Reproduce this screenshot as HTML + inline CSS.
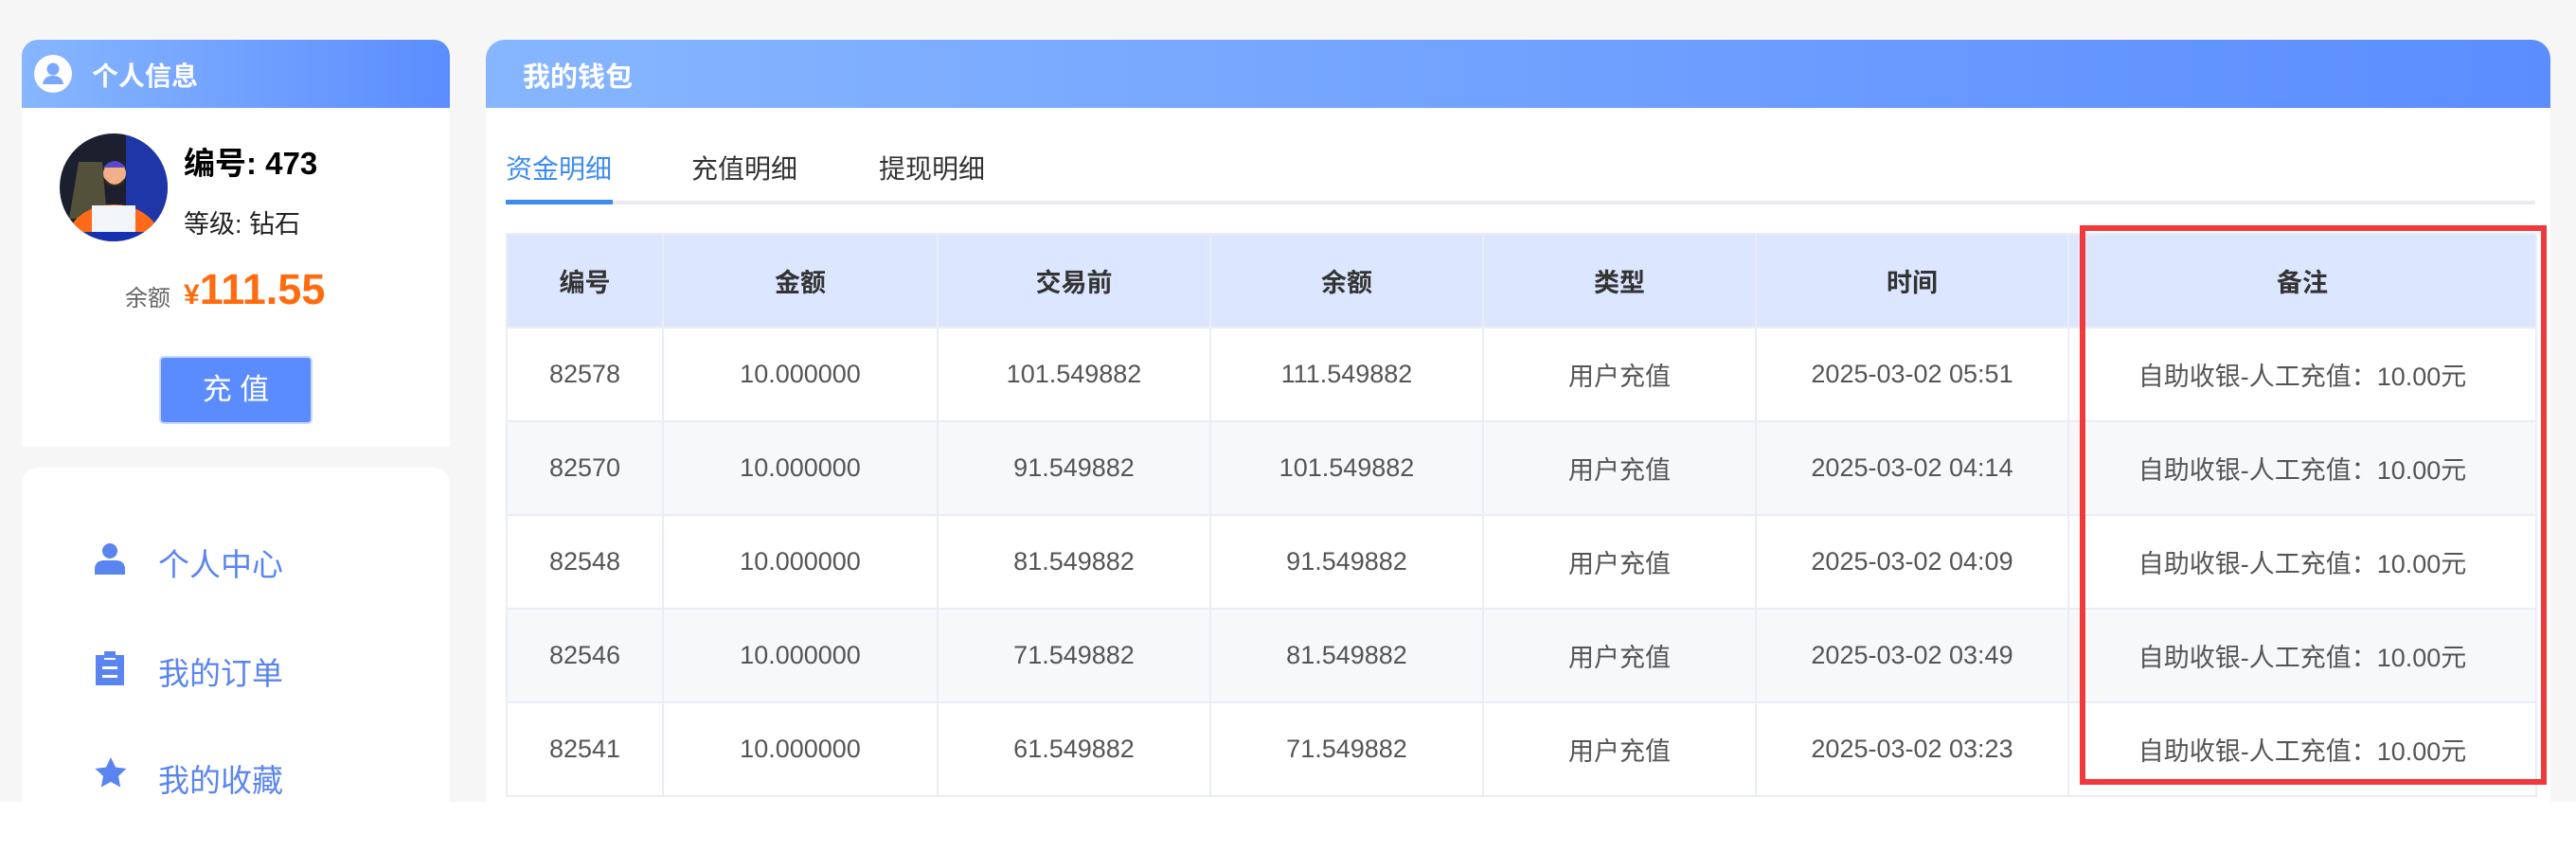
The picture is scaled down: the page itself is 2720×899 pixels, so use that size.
<!DOCTYPE html>
<html><head><meta charset="utf-8"><style>
*{margin:0;padding:0;box-sizing:border-box}
body{width:2720px;height:899px;background:#fff;font-family:"Liberation Sans","Noto Sans CJK SC",sans-serif;position:relative;overflow:hidden}
.bg{position:absolute;left:0;top:0;width:2720px;height:847px;background:#f6f6f6}
.abs{position:absolute}
.hdr{background:linear-gradient(90deg,#87b6ff,#5b8dff);overflow:hidden}
.tri{position:absolute;width:0;height:0;border-left:solid transparent;border-right:solid transparent}
table{border-collapse:collapse;table-layout:fixed}
td,th{border:2px solid #e9edf5;text-align:center;font-size:27px;color:#555;height:99px;font-weight:normal}
th{background:#dce6fe;color:#333;font-weight:bold}
tr.alt td{background:#f7f8fa}
.menu{position:absolute;left:167px;font-size:33px;color:#5a85f0}
</style></head><body>
<div class="bg"></div>
<div class="abs" style="left:23px;top:42px;width:452px;height:430px;background:#fff;border-radius:17px 17px 0 0;overflow:hidden">
 <div class="hdr abs" style="left:0;top:0;width:452px;height:72px">
  <div class="tri" style="left:320px;top:24px;border-width:0 45px 48px;border-bottom-color:rgba(255,255,255,.28)"></div>
  <div class="tri" style="left:360px;top:6px;border-width:0 55px 66px;border-bottom-color:rgba(255,255,255,.3)"></div>
  <svg class="abs" style="left:12px;top:15px" width="42" height="42" viewBox="0 0 42 42"><circle cx="21" cy="21" r="20" fill="#fff"/><circle cx="21" cy="16" r="6.5" fill="#7aa8ff"/><path d="M10 32c1-7 6-9 11-9s10 2 11 9z" fill="#7aa8ff"/></svg>
  <div class="abs" style="left:74px;top:17px;font-size:28px;font-weight:bold;color:#fff">个人信息</div>
 </div>
</div>
<svg class="abs" style="left:63px;top:141px" width="114" height="114" viewBox="0 0 114 114"><defs><clipPath id="c"><circle cx="57" cy="57" r="57"/></clipPath></defs><g clip-path="url(#c)"><rect width="114" height="114" fill="#1b1f2e"/><rect x="70" y="0" width="44" height="114" fill="#1e36a8"/><path d="M20 30 L45 30 L50 90 L10 90z" fill="#6b6640" opacity=".7"/><ellipse cx="57" cy="115" rx="50" ry="40" fill="#ff6a1a"/><circle cx="58" cy="42" r="12" fill="#f1b08a"/><path d="M46 36 q12-14 24 0z" fill="#5b47c8"/><path d="M48 48 q10 12 20 0 l0 4 q-10 8 -20 0z" fill="#3a2a20"/><rect x="34" y="76" width="46" height="30" fill="#f2f6fb"/><rect x="0" y="104" width="114" height="10" fill="#1530b0"/></g></svg>
<div class="abs" style="left:194px;top:146px;font-size:33px;font-weight:bold;color:#000">编号: 473</div>
<div class="abs" style="left:194px;top:215px;font-size:27px;color:#222">等级: 钻石</div>
<div class="abs" style="left:132px;top:295px;font-size:24px;color:#666">余额</div>
<div class="abs" style="left:194px;top:280px;font-size:45px;font-weight:bold;color:#ff6c0f"><span style="font-size:30px">¥</span>111.55</div>
<div class="abs" style="left:168px;top:376px;width:162px;height:72px;background:#5b8cff;border:2px solid #c9d8ff;border-radius:5px;color:#fff;font-size:31px;text-align:center;line-height:68px">充 值</div>
<div class="abs" style="left:23px;top:494px;width:452px;height:353px;background:#fff;border-radius:17px 17px 0 0"></div>
<svg class="abs" style="left:99px;top:573px" width="34" height="34" viewBox="0 0 34 34"><circle cx="17" cy="9" r="8" fill="#5a85f0"/><path d="M1 34v-6c0-6 4-9 10-9h12c6 0 10 3 10 9v6z" fill="#5a85f0"/></svg>
<div class="menu" style="top:570px">个人中心</div>
<svg class="abs" style="left:101px;top:688px" width="30" height="36" viewBox="0 0 30 36"><rect x="0" y="4" width="30" height="32" fill="#5a85f0"/><rect x="9" y="0" width="12" height="8" fill="#5a85f0"/><rect x="7" y="16" width="16" height="3" fill="#fff"/><rect x="7" y="25" width="16" height="3" fill="#fff"/><rect x="9" y="7" width="12" height="2" fill="#fff"/></svg>
<div class="menu" style="top:685px">我的订单</div>
<svg class="abs" style="left:100px;top:800px" width="34" height="32" viewBox="0 0 34 32"><path d="M17 0l5 10.5 11.5 1.5-8.5 8 2.2 11.5L17 26l-10.2 5.5L9 20 .5 12 12 10.5z" fill="#5a85f0"/></svg>
<div class="menu" style="top:798px">我的收藏</div>
<div class="abs" style="left:513px;top:42px;width:2180px;height:805px;background:#fff;border-radius:20px 20px 0 0;overflow:hidden">
 <div class="hdr abs" style="left:0;top:0;width:2180px;height:72px">
  <div class="tri" style="left:1960px;top:28px;border-width:0 55px 44px;border-bottom-color:rgba(255,255,255,.22)"></div>
  <div class="tri" style="left:2050px;top:8px;border-width:0 60px 64px;border-bottom-color:rgba(255,255,255,.28)"></div>
  <div class="abs" style="left:39px;top:16px;font-size:29px;font-weight:bold;color:#fff">我的钱包</div>
 </div>
 <div class="abs" style="left:21px;top:115px;font-size:28px;color:#3d8cf0">资金明细</div>
 <div class="abs" style="left:217px;top:115px;font-size:28px;color:#333">充值明细</div>
 <div class="abs" style="left:415px;top:115px;font-size:28px;color:#333">提现明细</div>
 <div class="abs" style="left:21px;top:170px;width:2143px;height:4px;background:#e8eaef"></div>
 <div class="abs" style="left:21px;top:169px;width:113px;height:5px;background:#3d8cf0"></div>
</div>
<table class="abs" style="left:534px;top:246px;width:2143px">
<colgroup><col style="width:165px"><col style="width:290px"><col style="width:288px"><col style="width:288px"><col style="width:288px"><col style="width:330px"><col style="width:494px"></colgroup>
<tr><th>编号</th><th>金额</th><th>交易前</th><th>余额</th><th>类型</th><th>时间</th><th>备注</th></tr>
<tr><td>82578</td><td>10.000000</td><td>101.549882</td><td>111.549882</td><td>用户充值</td><td>2025-03-02 05:51</td><td>自助收银-人工充值：10.00元</td></tr>
<tr class="alt"><td>82570</td><td>10.000000</td><td>91.549882</td><td>101.549882</td><td>用户充值</td><td>2025-03-02 04:14</td><td>自助收银-人工充值：10.00元</td></tr>
<tr><td>82548</td><td>10.000000</td><td>81.549882</td><td>91.549882</td><td>用户充值</td><td>2025-03-02 04:09</td><td>自助收银-人工充值：10.00元</td></tr>
<tr class="alt"><td>82546</td><td>10.000000</td><td>71.549882</td><td>81.549882</td><td>用户充值</td><td>2025-03-02 03:49</td><td>自助收银-人工充值：10.00元</td></tr>
<tr><td>82541</td><td>10.000000</td><td>61.549882</td><td>71.549882</td><td>用户充值</td><td>2025-03-02 03:23</td><td>自助收银-人工充值：10.00元</td></tr>
</table>
<div class="abs" style="left:0;top:847px;width:2720px;height:52px;background:#fff"></div>
<div class="abs" style="left:2196px;top:238px;width:493px;height:591px;border:6px solid #f0393a"></div>
</body></html>
